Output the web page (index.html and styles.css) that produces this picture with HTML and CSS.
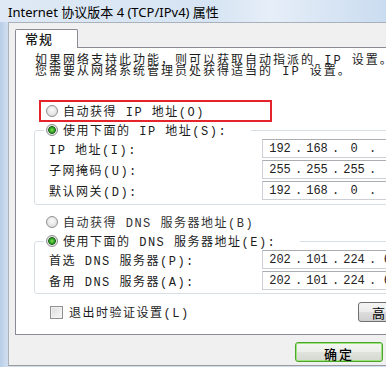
FILE: index.html
```html
<!DOCTYPE html>
<html lang="zh-CN">
<head>
<meta charset="UTF-8">
<meta name="viewport" content="width=device-width, initial-scale=1.0">
<title>Internet 协议版本 4 (TCP/IPv4) 属性</title>
<link rel="stylesheet" href="styles.css">
</head>
<body>
<div class="titlebar">Internet 协议版本 4 (TCP/IPv4) 属性</div>
<div class="frame">
    <div class="client">
        <div class="tabs">
            <div class="tab">常规</div>
        </div>
        <div class="panel">
            <p class="intro">如果网络支持此功能，则可以获取自动指派的 IP 设置。否则，<br>您需要从网络系统管理员处获得适当的 IP 设置。</p>

            <div class="option highlight"><span class="radio"></span>自动获得 IP 地址(O)</div>

            <fieldset class="group">
                <legend class="legend-ip"><span class="option"><span class="radio checked"></span>使用下面的 IP 地址(S):</span></legend>
                <div class="field-row">
                    <span class="field-label">IP 地址(I):</span>
                    <div class="ip-box"><span>192</span><i>.</i><span>168</span><i>.</i><span>0</span><i>.</i><span>1</span></div>
                </div>
                <div class="field-row">
                    <span class="field-label">子网掩码(U):</span>
                    <div class="ip-box"><span>255</span><i>.</i><span>255</span><i>.</i><span>255</span><i>.</i><span>0</span></div>
                </div>
                <div class="field-row">
                    <span class="field-label">默认网关(D):</span>
                    <div class="ip-box"><span>192</span><i>.</i><span>168</span><i>.</i><span>0</span><i>.</i><span>1</span></div>
                </div>
            </fieldset>

            <div class="option dns-auto"><span class="radio"></span>自动获得 DNS 服务器地址(B)</div>

            <fieldset class="group group-dns">
                <legend class="legend-dns"><span class="option"><span class="radio checked"></span>使用下面的 DNS 服务器地址(E):</span></legend>
                <div class="field-row">
                    <span class="field-label">首选 DNS 服务器(P):</span>
                    <div class="ip-box"><span>202</span><i>.</i><span>101</span><i>.</i><span>224</span><i>.</i><span>68</span></div>
                </div>
                <div class="field-row">
                    <span class="field-label">备用 DNS 服务器(A):</span>
                    <div class="ip-box"><span>202</span><i>.</i><span>101</span><i>.</i><span>224</span><i>.</i><span>69</span></div>
                </div>
            </fieldset>

            <div class="check-row">
                <label class="check-label"><span class="checkbox"></span>退出时验证设置(L)</label>
                <button class="btn adv">高级(V)...</button>
            </div>
        </div>
        <div class="actions">
            <button class="btn ok">确定</button>
        </div>
    </div>
</div>
</body>
</html>
```

FILE: styles.css
```css
* {
    box-sizing: border-box;
}
html, body {
    margin: 0;
    padding: 0;
    overflow: hidden;
}
body {
    width: 386px;
    height: 367px;
    background-color: #c3d6ec;
    font-family: "Liberation Mono", "Noto Sans CJK SC", monospace;
    font-size: 12px;
    color: #1c1c1c;
}
.titlebar {
    height: 22px;
    padding-left: 8px;
    display: flex;
    align-items: center;
    white-space: nowrap;
    font-family: "Noto Sans", "Noto Sans CJK SC", sans-serif;
    font-size: 13px;
    color: #000;
    background: linear-gradient(to right, #dfe9f5, #d6e4f3 55%, #e6eef8 70%, #cadcf0);
}
.frame {
    height: 345px;
    padding-left: 8px;
    background: linear-gradient(to right, #b7cde7, #cddcee 6px);
}
.client {
    width: 500px;
    height: 344px;
    padding: 6px 0 0 6px;
    background-color: #f0f0f0;
    border: 1px solid #a9b1bb;
    border-right: none;
    border-bottom-color: #9c9c9c;
}
.tabs {
    display: flex;
}
.tab {
    position: relative;
    z-index: 1;
    width: 63px;
    height: 19px;
    margin-bottom: -1px;
    padding-left: 9px;
    background-color: #fff;
    border: 1px solid #898c95;
    border-bottom: none;
    border-radius: 2px 2px 0 0;
    font-family: "Noto Sans CJK SC", sans-serif;
    font-size: 13px;
    font-weight: 500;
    line-height: 18px;
    letter-spacing: 1px;
}
.panel {
    width: 420px;
    height: 288px;
    background-color: #fff;
    border: 1px solid #898c95;
}
.intro {
    margin: 8px 0 0 19px;
    line-height: 11px;
    letter-spacing: 2px;
    white-space: nowrap;
}
.option {
    display: flex;
    align-items: center;
    gap: 5px;
    height: 18px;
    white-space: nowrap;
    letter-spacing: 1.5px;
}
.highlight {
    width: 233px;
    height: 22px;
    margin: 22px 0 0 23px;
    padding-left: 5px;
    border: 2px solid #e5232b;
}
.radio {
    flex: none;
    width: 12px;
    height: 12px;
    border-radius: 50%;
    border: 1px solid #8d8f91;
    background: radial-gradient(circle at 50% 40%, #fafafa, #d6d6d6);
}
.radio.checked {
    background: radial-gradient(circle, #7fe45a 0, #2e9f22 2.5px, #1e5f19 3.5px, #e9e9e9 4.2px, #d2d2d2 6px);
}
.group {
    margin: 0 0 0 18px;
    padding: 0 0 3px 0;
    min-width: 0;
    border: 1px solid #d5dfe5;
    border-radius: 3px;
}
.group legend {
    height: 16px;
    margin-left: 9px;
    padding: 0;
}
.group legend .option {
    height: 16px;
    padding-left: 2px;
}
.legend-ip {
    width: 207px;
}
.legend-dns {
    width: 256px;
}
.field-row {
    display: flex;
    align-items: center;
    height: 21px;
    padding-left: 14px;
}
.field-label {
    flex: none;
    width: 213px;
    white-space: nowrap;
    letter-spacing: 1.5px;
}
.ip-box {
    flex: none;
    display: flex;
    align-items: center;
    width: 150px;
    height: 19px;
    padding-left: 2px;
    border: 1px solid #ccd0d5;
    border-top-color: #abadb3;
    color: #222;
}
.ip-box span {
    width: 30px;
    text-align: center;
}
.ip-box i {
    width: 7px;
    font-style: normal;
    text-align: center;
}
.dns-auto {
    margin: 8px 0 0 30px;
    color: #333;
}
.group-dns {
    margin-top: 2px;
    padding-bottom: 2px;
}
.check-row {
    display: flex;
    align-items: center;
    height: 20px;
    margin-top: 8px;
    padding-left: 34px;
}
.check-label {
    flex: none;
    display: flex;
    align-items: center;
    gap: 6px;
    width: 308px;
    white-space: nowrap;
    letter-spacing: 1.5px;
}
.checkbox {
    flex: none;
    width: 13px;
    height: 13px;
    border: 1px solid #8e8f8f;
    background: linear-gradient(135deg, #dcdcdc, #f8f8f8);
    box-shadow: inset 0 0 0 1px #f2f2f2;
}
.btn {
    flex: none;
    height: 20px;
    border: 1px solid #707070;
    border-radius: 3px;
    background: linear-gradient(#f4f4f4, #ebebeb 50%, #dddddd 51%, #cfcfcf);
    font-family: "Noto Sans CJK SC", sans-serif;
    font-size: 13px;
    color: #000;
    cursor: pointer;
    white-space: nowrap;
}
.adv {
    padding: 0 8px 0 13px;
    text-align: left;
    letter-spacing: 1px;
}
.actions {
    display: flex;
    margin-top: 7px;
    padding-left: 280px;
}
.ok {
    width: 88px;
    border-color: #4aa52a;
    box-shadow: inset 0 0 0 1px #9de47c;
    background: linear-gradient(#f4f7f2, #ebefe8 50%, #dfe3dc 51%, #d3d8d0);
    font-weight: 500;
    letter-spacing: 2px;
}
```
